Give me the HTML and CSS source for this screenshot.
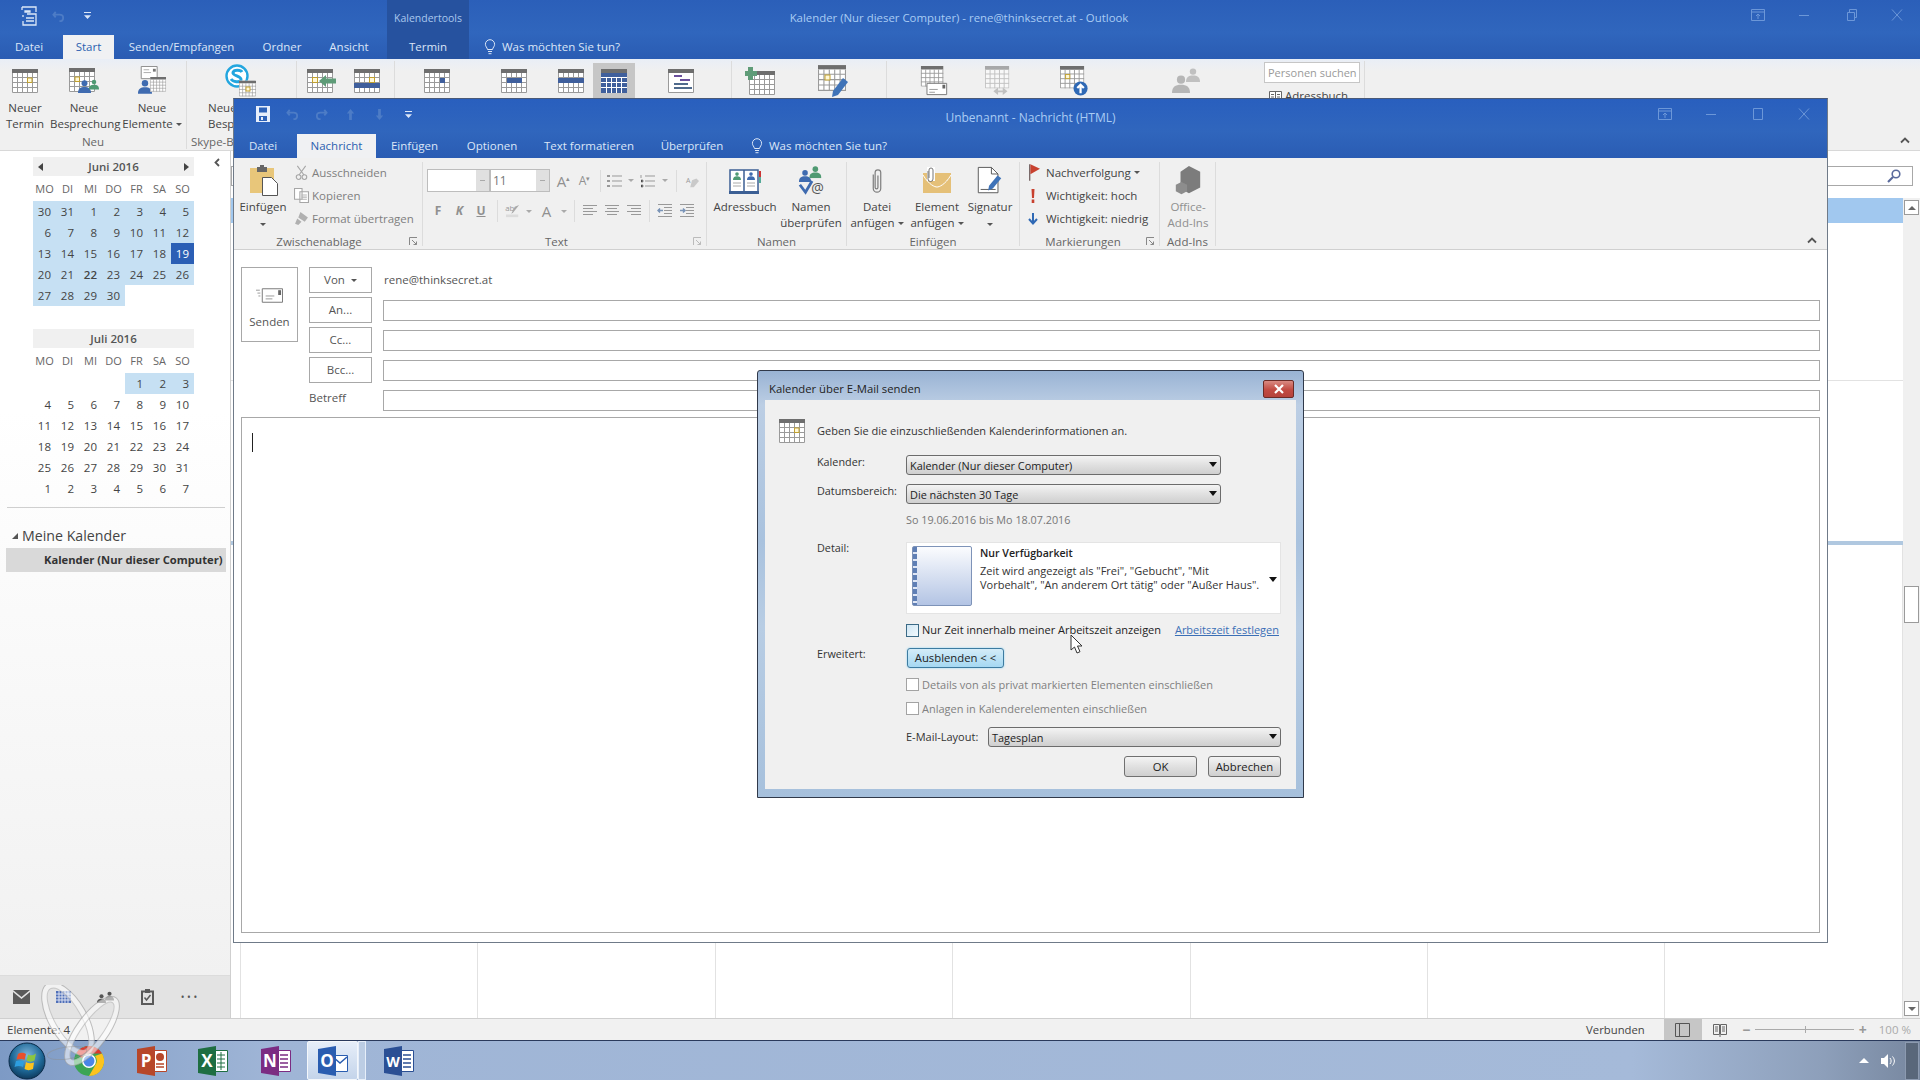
FILE: index.html
```html
<!DOCTYPE html>
<html lang="de">
<head>
<meta charset="utf-8">
<title>Kalender - Outlook</title>
<link rel="stylesheet" href="styles.css">
</head>
<body>
<svg class="defs" aria-hidden="true">
  <symbol id="cal" viewBox="0 0 26 24">
    <path fill="#fff" d="M0 0h26v24H0z"/><path fill="#6e6e6e" d="M0 0h26v4H0z"/>
    <path stroke="#9a9a9a" fill="none" d="M.5 4v19.5h25V4M5.5 4v20M10.5 4v20M15.5 4v20M20.5 4v20M0 8.5h26M0 13.5h26M0 18.5h26"/>
  </symbol>
  <symbol id="bulb" viewBox="0 0 12 16">
    <path fill="none" stroke="#dbe6f7" d="M6 .7a4.6 4.6 0 0 0-4.6 4.6c0 2.2 1.6 3 2.1 5.2h5c.5-2.2 2.1-3 2.1-5.2A4.6 4.6 0 0 0 6 .7zM4 12.5h4M4.5 14.7h3"/>
  </symbol>
  <symbol id="chev" viewBox="0 0 10 7"><path fill="none" stroke="#555" stroke-width="1.8" d="M1 5.5l4-4 4 4"/></symbol>
  <symbol id="launch" viewBox="0 0 9 9"><path fill="none" stroke="#888" d="M.5 8V.5H8M3 3l4.5 4.5M7.5 4.5v3h-3"/></symbol>
  <symbol id="person" viewBox="0 0 14 14"><circle cx="7" cy="3.6" r="3.2"/><path d="M0 14c0-5 2.600-6.500 7-6.500S14 9 14 14z"/></symbol>
</svg>

<div class="outlook">
  <header class="titlebar">
    <div class="tb-top">
      <div class="tb-left">
        <div class="qat">
          <svg class="qat-app" viewBox="0 0 18 20"><path fill="none" stroke="#dce7f8" stroke-width="1.3" d="M2 1h14v5M2 1v3M7 8h9v11H3v-4M3 9v2M6 12h8M6 15h8M5 5h5v1H5z"/></svg>
          <svg class="qat-undo" viewBox="0 0 14 14"><path fill="none" stroke="#4d7cc6" stroke-width="2" d="M4 2L1.500 5 4 8M2 5h6c3 0 4 2 4 3.500S11 12 8 12"/></svg>
          <svg class="qat-drop" viewBox="0 0 8 9"><path fill="#dce7f8" d="M0 0h8v1.200H0zM0 3.500h8L4 8z"/></svg>
        </div>
        <div class="ctx-label">Kalendertools</div>
      </div>
      <div class="tb-title main-title">Kalender (Nur dieser Computer) - rene@thinksecret.at - Outlook</div>
      <div class="winctl">
        <span class="ctl"><svg viewBox="0 0 14 12"><path fill="none" stroke="#6c97d8" d="M.5.5h13v11H.5zM.5 3h13M7 10V5M5 7l2-2 2 2"/></svg></span>
        <span class="ctl"><svg viewBox="0 0 14 12"><path stroke="#6c97d8" d="M2 6.500h10"/></svg></span>
        <span class="ctl"><svg viewBox="0 0 14 12"><path fill="none" stroke="#6c97d8" d="M3.500 3.500h7v8h-7zM5.500 3.500v-3h7v8h-2"/></svg></span>
        <span class="ctl"><svg viewBox="0 0 14 12"><path stroke="#6c97d8" d="M2 .5l10 11M12 .5l-10 11"/></svg></span>
      </div>
    </div>
    <nav class="tabs tabs-main">
      <span class="tab tab-datei">Datei</span>
      <span class="tab tab-on">Start</span>
      <span class="tab">Senden/Empfangen</span>
      <span class="tab">Ordner</span>
      <span class="tab tab-ansicht">Ansicht</span>
      <span class="tab tab-ctx">Termin</span>
      <span class="tab tab-ask"><svg class="bulb"><use href="#bulb"/></svg>Was möchten Sie tun?</span>
    </nav>
  </header>

  <section class="ribbon ribbon-main">
    <div class="mg g-neu">
      <div class="mg-btns">
        <div class="mb mb50"><div class="mb-ic"><svg class="ic26"><use href="#cal"/><rect x="15.500" y="9" width="4.500" height="4.500" fill="#fff8d8" stroke="#c0a030"/></svg></div><div class="mb-t">Neuer<br>Termin</div></div>
        <div class="mb mb68"><div class="mb-ic"><svg class="ic30" viewBox="0 0 30 26"><use href="#cal" width="26" height="24"/><rect x="6" y="9" width="4.500" height="4.500" fill="#fff8d8" stroke="#c0a030"/><use href="#person" x="9" y="12" width="13" height="13" fill="#3f6bb0"/><use href="#person" x="20" y="11" width="10" height="11" fill="#4f9a72"/></svg></div><div class="mb-t">Neue<br>Besprechung</div></div>
        <div class="mb mb68"><div class="mb-ic"><svg class="ic30" viewBox="0 0 30 32"><path fill="#fff" stroke="#888" d="M3.500.5h17v13h-17z"/><path stroke="#aaa" d="M6 4h6M6 7h8"/><rect x="16" y="3" width="3" height="3" fill="#777"/><use href="#person" x="0" y="14" width="15" height="16" fill="#3f6bb0"/><use href="#cal" x="13" y="11" width="17" height="17"/></svg></div><div class="mb-t">Neue<br>Elemente<i class="caret"></i></div></div>
      </div>
      <div class="mg-label">Neu</div>
    </div>
    <div class="mg g-skype">
      <div class="mg-btns">
        <div class="mb mb108"><div class="mb-ic"><svg class="ic32" viewBox="0 0 32 34"><circle cx="12" cy="12" r="10.500" fill="#fff" stroke="#23a6df" stroke-width="2.400"/><path fill="none" stroke="#23a6df" stroke-width="3" d="M17 8c-1-2-8-3-9 .5S17 12 16 16c-1 3-8 2-10-1"/><use href="#cal" x="14" y="16" width="17" height="17"/><rect x="21" y="23" width="4" height="4" fill="#fff8d8" stroke="#c0a030"/></svg></div><div class="mb-t mb-part">Neue<br>Besp</div></div>
      </div>
      <div class="mg-label mg-label-part">Skype-B</div>
    </div>
    <div class="mg g-3">
      <div class="mg-btns">
        <div class="mb mb50"><div class="mb-ic"><svg class="ic30" viewBox="0 0 30 24"><use href="#cal" width="26" height="24"/><rect x="5.500" y="8.500" width="5" height="5" fill="#fff8d8" stroke="#c0a030"/><path fill="#5f9c78" d="M12 12l7-6v3.500h10v5H19V18z"/></svg></div></div>
        <div class="mb mb40"><div class="mb-ic"><svg class="ic26"><use href="#cal"/><path fill="#3f5f9c" d="M0 14h26v5H0z"/><rect x="15.500" y="8.500" width="5" height="5" fill="#fff8d8" stroke="#c0a030"/></svg></div></div>
      </div>
    </div>
    <div class="mg g-4">
      <div class="mg-btns">
        <div class="mb mb84"><div class="mb-ic"><svg class="ic26"><use href="#cal"/><path fill="#3f5f9c" d="M16 9h5v5h-5z"/></svg></div></div>
        <div class="mb mb69"><div class="mb-ic"><svg class="ic26"><use href="#cal"/><path fill="#3f5f9c" d="M6 9h5v5H6zM11 9h5v5h-5zM16 9h5v5h-5z"/></svg></div></div>
        <div class="mb mb45"><div class="mb-ic"><svg class="ic26"><use href="#cal"/><path fill="#3f5f9c" d="M0 9h26v5H0z"/></svg></div></div>
        <div class="mb mb42 mb-sel"><div class="mb-ic"><svg class="ic26"><use href="#cal"/><path fill="#3f5f9c" d="M0 4h26v20H0z"/><path stroke="#fff" d="M5.500 9v15M10.500 9v15M15.500 9v15M20.500 9v15M0 8.500h26M0 13.500h26M0 18.500h26"/></svg></div></div>
        <div class="mb mb92"><div class="mb-ic"><svg class="ic26"><use href="#cal"/><path fill="#fff" d="M1 4h24v19H1z"/><path stroke="#6a4f9c" stroke-width="2" d="M6 7h8M12 11h10"/><path stroke="#4f6a8c" stroke-width="2" d="M6 15h14M6 19h18"/></svg></div></div>
      </div>
    </div>
    <div class="mg g-5">
      <div class="mg-btns">
        <div class="mb mb56"><div class="mb-ic"><svg class="ic30" viewBox="0 0 30 28"><use href="#cal" x="4" y="4" width="26" height="24"/><path fill="#5f9c78" d="M3 0h5v4h4v5H8v4H3V9H0V4h3z"/></svg></div></div>
        <div class="mb mb92"><div class="mb-ic"><svg class="ic32" viewBox="0 0 32 34"><use href="#cal" width="28" height="28"/><rect x="7" y="11" width="5" height="5" fill="#fff8d8" stroke="#c0a030"/><path fill="#3f73b8" d="M25 14l5 4-10 13-6 2 1-6z"/></svg></div></div>
      </div>
    </div>
    <div class="mg g-6">
      <div class="mg-btns">
        <div class="mb mb94"><div class="mb-ic"><svg class="ic30" viewBox="0 0 30 32"><use href="#cal" width="26" height="22"/><path fill="#fff" stroke="#777" d="M7.500 18.500h21v12h-21z"/><path stroke="#999" d="M10 25h9M10 28h6"/><rect x="24" y="20" width="3" height="4" fill="#666"/></svg></div></div>
        <div class="mb mb36"><div class="mb-ic"><svg class="ic30 faded" viewBox="0 0 30 32"><use href="#cal" width="26" height="24"/><path fill="#999" d="M9 27l5-4v3h5v-3l5 4-5 4v-3h-5v3z"/></svg></div></div>
        <div class="mb mb113"><div class="mb-ic"><svg class="ic30" viewBox="0 0 30 32"><use href="#cal" width="26" height="24"/><rect x="6" y="9" width="4.500" height="4.500" fill="#fff8d8" stroke="#c0a030"/><circle cx="22" cy="24" r="7.500" fill="#2f69b5"/><path stroke="#fff" stroke-width="2.400" fill="none" d="M22 29v-9M18.500 23.500L22 20l3.500 3.500"/></svg></div></div>
        <div class="mb mb114"><div class="mb-ic"><svg class="ic32 faded" viewBox="0 0 32 34"><use href="#person" x="1" y="10" width="18" height="20" fill="#888"/><use href="#person" x="15" y="1" width="14" height="20" fill="#999"/></svg></div></div>
      </div>
    </div>
    <div class="psearch">
      <div class="psearch-box">Personen suchen</div>
      <div class="psearch-ab"><svg class="ab-ic" viewBox="0 0 13 11"><path fill="#fff" stroke="#666" d="M.5.5h12v10H.5z"/><path stroke="#666" d="M6.500 1v9M2 3.500h3M2 6h3M8 3.500h3M8 6h3"/></svg>Adressbuch</div>
    </div>
    <div class="mg-end"><svg class="chev"><use href="#chev"/></svg></div>
  </section>

  <main class="body">
    <aside class="nav">
      <svg class="nav-collapse" viewBox="0 0 6 9"><path fill="none" stroke="#555" stroke-width="1.800" d="M5 1L1.500 4.500 5 8"/></svg>
      <section class="month">
        <div class="m-head"><i class="tri-l"></i><b>Juni 2016</b><i class="tri-r"></i></div>
        <div class="wk"><span>MO</span><span>DI</span><span>MI</span><span>DO</span><span>FR</span><span>SA</span><span>SO</span></div>
        <div class="days">
          <span class="in">30</span><span class="in">31</span><span class="in">1</span><span class="in">2</span><span class="in">3</span><span class="in">4</span><span class="in">5</span>
          <span class="in">6</span><span class="in">7</span><span class="in">8</span><span class="in">9</span><span class="in">10</span><span class="in">11</span><span class="in">12</span>
          <span class="in">13</span><span class="in">14</span><span class="in">15</span><span class="in">16</span><span class="in">17</span><span class="in">18</span><span class="today">19</span>
          <span class="in">20</span><span class="in">21</span><span class="in strong">22</span><span class="in">23</span><span class="in">24</span><span class="in">25</span><span class="in">26</span>
          <span class="in">27</span><span class="in">28</span><span class="in">29</span><span class="in">30</span><span></span><span></span><span></span>
        </div>
      </section>
      <section class="month month2">
        <div class="m-head m-head-c"><b>Juli 2016</b></div>
        <div class="wk"><span>MO</span><span>DI</span><span>MI</span><span>DO</span><span>FR</span><span>SA</span><span>SO</span></div>
        <div class="days">
          <span></span><span></span><span></span><span></span><span class="in">1</span><span class="in">2</span><span class="in">3</span>
          <span>4</span><span>5</span><span>6</span><span>7</span><span>8</span><span>9</span><span>10</span>
          <span>11</span><span>12</span><span>13</span><span>14</span><span>15</span><span>16</span><span>17</span>
          <span>18</span><span>19</span><span>20</span><span>21</span><span>22</span><span>23</span><span>24</span>
          <span>25</span><span>26</span><span>27</span><span>28</span><span>29</span><span>30</span><span>31</span>
          <span>1</span><span>2</span><span>3</span><span>4</span><span>5</span><span>6</span><span>7</span>
        </div>
      </section>
      <div class="nav-rule"></div>
      <div class="my-cals"><i class="tri-d"></i>Meine Kalender</div>
      <div class="cal-sel">Kalender (Nur dieser Computer)</div>
      <div class="nav-fill"></div>
      <div class="nav-mods">
        <span class="mod"><svg viewBox="0 0 17 14" class="mod-mail"><path fill="#5a5a5a" d="M0 0h17L8.500 7zM0 2l8.500 7L17 2v12H0z"/></svg></span>
        <span class="mod"><svg viewBox="0 0 15 12" class="mod-cal"><path fill="#4f6fb8" d="M0 0h15v12H0z"/><path stroke="#dfe4f2" d="M3 0v12M6 0v12M9 0v12M12 0v12M0 3h15M0 6h15M0 9h15"/></svg></span>
        <span class="mod"><svg viewBox="0 0 17 12" class="mod-ppl"><use href="#person" x="0" y="3" width="9" height="9" fill="#555"/><use href="#person" x="8" y="0" width="9" height="10" fill="#555"/></svg></span>
        <span class="mod"><svg viewBox="0 0 13 16" class="mod-task"><path fill="none" stroke="#5a5a5a" stroke-width="2" d="M1 2.500h11V15H1z"/><path fill="#5a5a5a" d="M4 0h5v4H4z"/><path fill="none" stroke="#5a5a5a" stroke-width="1.500" d="M3.500 8.500l2 2.500 4-5"/></svg></span>
        <span class="mod mod-dots">• • •</span>
      </div>
    </aside>
    <div class="view">
      <div class="view-top"><div class="vsearch"><svg viewBox="0 0 14 14" class="mag"><circle cx="9" cy="5" r="3.800" fill="none" stroke="#5a6a9c" stroke-width="1.600"/><path stroke="#5a6a9c" stroke-width="2.200" d="M6 8l-5 5"/></svg></div></div>
      <div class="view-main">
        <div class="grid">
          <div class="g-blue"></div>
          <div class="g-slot1"></div>
          <div class="g-slot2"></div>
          <div class="g-bar"></div>
          <div class="g-days"><span class="dcol"></span><span class="dcol"></span><span class="dcol"></span><span class="dcol"></span><span class="dcol"></span><span class="dcol"></span><span class="dcol dcol-last"></span></div>
        </div>
        <div class="sb">
          <span class="sb-btn"><i class="up"></i></span>
          <span class="sb-thumb"></span>
          <span class="sb-btn sb-down"><i class="down"></i></span>
        </div>
      </div>
    </div>
  </main>

  <footer class="status">
    <span class="st-count">Elemente: 4</span>
    <div class="st-right">
      <span class="st-conn">Verbunden</span>
      <span class="st-view"><svg viewBox="0 0 15 14"><path fill="none" stroke="#555" d="M.5.5h14v13H.5zM4.500 1v12"/></svg></span>
      <span class="st-read"><svg viewBox="0 0 14 14"><path fill="none" stroke="#666" d="M.5 1.500h6v10h-6zM7.500 1.500h6v10h-6zM2 4h3M2 6h3M2 8h3M9 4h3M9 6h3M9 8h3M7 12v2"/></svg></span>
      <span class="st-zm">−</span>
      <span class="st-slider"><i></i></span>
      <span class="st-zm st-zp">+</span>
      <span class="st-pct">100 %</span>
    </div>
  </footer>

  <div class="taskbar">
    <span class="tk tk-start"><svg viewBox="0 0 38 38" class="orb"><defs><radialGradient id="og" cx=".5" cy=".35" r=".7"><stop offset="0" stop-color="#7fb6dc"/><stop offset=".6" stop-color="#1d6796"/><stop offset="1" stop-color="#0b3050"/></radialGradient></defs><circle cx="19" cy="19" r="18" fill="url(#og)" stroke="#0a2a48"/><path fill="#e8502c" d="M10 12c3-2 6-1 8 0l-1.500 6c-2-1-4-1.500-8-.5z"/><path fill="#8cc63f" d="M20 12.500c3 1.500 5 1 8-1l-1.500 7c-3 1.500-5 1.500-8 0z"/><path fill="#2d9ee0" d="M8 19c3-1 6-.5 8.200.5L15 25c-2-1-5-1.500-8.500 0z"/><path fill="#fcc31e" d="M18 20c2 1.500 5 1.500 8 .5L25 27c-3 1.500-6 1.500-8.500 0z"/></svg></span>
    <span class="tk tk-chrome"><svg viewBox="0 0 30 30" class="tk-ic"><circle cx="15" cy="15" r="15" fill="#3ca555"/><path fill="#e0352b" d="M15 0a15 15 0 0 1 13 7.500H15a7.500 7.500 0 0 0-7 4.800L2.500 6.800A15 15 0 0 1 15 0z"/><path fill="#fcc31e" d="M28 7.500A15 15 0 0 1 15 30l6.500-11.200A7.500 7.500 0 0 0 21 10z"/><circle cx="15" cy="15" r="7" fill="#fff"/><circle cx="15" cy="15" r="5.500" fill="#4a85e8"/></svg></span>
    <span class="tk tk-ppt"><svg viewBox="0 0 30 30" class="tk-ic"><path fill="#fff" stroke="#b7472a" d="M14 4.500h15.500v21H14z"/><path fill="#b7472a" d="M0 3l18-3v30L0 27z"/><circle cx="23" cy="11" r="4" fill="#b7472a"/><path stroke="#b7472a" stroke-width="1.500" d="M19 18h8M19 21h8"/><text x="9" y="21" class="tk-l">P</text></svg></span>
    <span class="tk tk-xl"><svg viewBox="0 0 30 30" class="tk-ic"><path fill="#fff" stroke="#1e6e42" d="M14 4.500h15.500v21H14z"/><path stroke="#1e6e42" d="M19 9h8M19 13h8M19 17h8M19 21h8M23 6v18"/><path fill="#1e6e42" d="M0 3l18-3v30L0 27z"/><text x="9" y="21" class="tk-l">X</text></svg></span>
    <span class="tk tk-on"><svg viewBox="0 0 30 30" class="tk-ic"><path fill="#fff" stroke="#7b2c82" d="M14 4.500h15.500v21H14z"/><path stroke="#7b2c82" stroke-width="1.500" d="M19 9h8M19 13h8M19 17h8M19 21h8"/><path fill="#7b2c82" d="M0 3l18-3v30L0 27z"/><text x="9" y="21" class="tk-l">N</text></svg></span>
    <span class="tk tk-ol"><svg viewBox="0 0 30 30" class="tk-ic"><path fill="#fff" stroke="#2a5db0" d="M14 9.500h15.500v16H14z"/><path fill="none" stroke="#2a5db0" stroke-width="1.500" d="M15 11l7 6 7-6"/><path fill="#2a5db0" d="M0 3l18-3v30L0 27z"/><text x="9" y="21" class="tk-l">O</text></svg></span>
    <span class="tk-ghost"></span>
    <span class="tk tk-wd"><svg viewBox="0 0 30 30" class="tk-ic"><path fill="#fff" stroke="#2b4f94" d="M14 4.500h15.500v21H14z"/><path stroke="#2b4f94" stroke-width="1.500" d="M19 9h8M19 13h8M19 17h8M19 21h8"/><path fill="#2b4f94" d="M0 3l18-3v30L0 27z"/><text x="9" y="21" class="tk-l tk-l-w">W</text></svg></span>
    <div class="tray">
      <i class="tray-up"></i>
      <svg class="tray-vol" viewBox="0 0 16 14"><path fill="#fff" d="M0 4h3l4-4v14l-4-4H0z"/><path fill="none" stroke="#fff" d="M9 4c1.500 2 1.500 4 0 6M11.500 2.500c2.500 3 2.500 6 0 9"/></svg>
      <span class="tray-desk"></span>
    </div>
  </div>
</div>

<div class="msg">
  <header class="msg-head">
    <div class="msg-top">
      <div class="qat qat-msg">
        <svg class="q-save" viewBox="0 0 14 16"><path fill="#e6eefb" d="M0 0h14v16H0z"/><path fill="#2d62b8" d="M3 1.500h8v5H3zM3 10h8v5H3z"/><path fill="#e6eefb" d="M5 11h2v3H5z"/></svg>
        <svg class="q-a" viewBox="0 0 14 14"><path fill="none" stroke="#4d7cc6" stroke-width="2" d="M4 2L1.500 5 4 8M2 5h6c3 0 4 2 4 3.500S11 12 8 12"/></svg>
        <svg class="q-a" viewBox="0 0 14 14"><path fill="none" stroke="#4d7cc6" stroke-width="2" d="M10 2l2.500 3L10 8M12 5H6C3 5 2 7 2 8.500S3 12 6 12"/></svg>
        <svg class="q-a" viewBox="0 0 14 14"><path fill="#4d7cc6" d="M7 1l4 5H8.500v7h-3V6H3z"/></svg>
        <svg class="q-a" viewBox="0 0 14 14"><path fill="#4d7cc6" d="M7 13l4-5H8.500V1h-3v7H3z"/></svg>
        <svg class="q-d" viewBox="0 0 8 9"><path fill="#dce7f8" d="M0 0h8v1.200H0zM0 3.500h8L4 8z"/></svg>
      </div>
      <div class="tb-title msg-title">Unbenannt - Nachricht (HTML)</div>
      <div class="winctl">
        <span class="ctl"><svg viewBox="0 0 14 12"><path fill="none" stroke="#6c97d8" d="M.5.5h13v11H.5zM.5 3h13M7 10V5M5 7l2-2 2 2"/></svg></span>
        <span class="ctl"><svg viewBox="0 0 14 12"><path stroke="#6c97d8" d="M2 6.500h10"/></svg></span>
        <span class="ctl"><svg viewBox="0 0 14 12"><path fill="none" stroke="#6c97d8" d="M2.500.5h9v11h-9z"/></svg></span>
        <span class="ctl"><svg viewBox="0 0 14 12"><path stroke="#6c97d8" d="M2 .5l10 11M12 .5l-10 11"/></svg></span>
      </div>
    </div>
    <nav class="tabs tabs-msg">
      <span class="tab tab-datei">Datei</span>
      <span class="tab tab-on">Nachricht</span>
      <span class="tab">Einfügen</span>
      <span class="tab">Optionen</span>
      <span class="tab">Text formatieren</span>
      <span class="tab">Überprüfen</span>
      <span class="tab tab-ask"><svg class="bulb"><use href="#bulb"/></svg>Was möchten Sie tun?</span>
    </nav>
  </header>

  <section class="ribbon ribbon-msg">
    <div class="rg rg-clip">
      <div class="rg-items">
        <div class="big big-paste">
          <div class="big-ic"><svg class="ic-paste" viewBox="0 0 28 31"><path fill="#e8c67a" d="M0 3h24v25H0z"/><path fill="#666" d="M7 2h10v5H7z"/><path fill="#666" d="M10 0h4v3h-4z"/><path fill="#fff" stroke="#555" d="M12.500 12.500h9l6 6v12h-15z"/></svg></div>
          <div class="big-t">Einfügen<br><i class="caret caret-c"></i></div>
        </div>
        <div class="smalls smalls-dim">
          <div class="sm"><svg class="sm-ic" viewBox="0 0 14 18"><path fill="none" stroke="#a6a6a6" stroke-width="1.300" d="M2 1l8 11M12 1L4 12"/><circle cx="3.500" cy="14.500" r="2.800" fill="none" stroke="#a6a6a6" stroke-width="1.300"/><circle cx="10.500" cy="14.500" r="2.800" fill="none" stroke="#a6a6a6" stroke-width="1.300"/></svg>Ausschneiden</div>
          <div class="sm"><svg class="sm-ic" viewBox="0 0 14 14"><path fill="#fff" stroke="#a6a6a6" d="M.5.5h7v10h-7zM5.500 3.500h8v10h-8z"/><path stroke="#b5b5b5" d="M7 6.500h5M7 8.500h5M7 10.500h5"/></svg>Kopieren</div>
          <div class="sm"><svg class="sm-ic" viewBox="0 0 14 14"><path fill="#b0b0b0" d="M6 1l7 5-3 4-6-4zM3 7l4 3-3 3-3-1z"/></svg>Format übertragen</div>
        </div>
      </div>
      <div class="rg-label lbl-clip">Zwischenablage</div>
      <svg class="launch"><use href="#launch"/></svg>
    </div>

    <div class="rg rg-text">
      <div class="rg-items rg-fmt">
        <div class="fmt fmt1">
          <span class="fbox"><i class="fbox-arrow"></i></span>
          <span class="fbox fbox2">11<i class="fbox-arrow"></i></span>
          <span class="fi fi-a1">A<sup>▴</sup></span>
          <span class="fi fi-a2">A<sup>▾</sup></span>
          <span class="fsep"></span>
          <span class="fi"><svg class="f16" viewBox="0 0 16 14"><path fill="#999" d="M0 1h3v2H0zM0 6h3v2H0zM0 11h3v2H0z"/><path stroke="#999" d="M5 2h10M5 7h10M5 12h10"/></svg></span>
          <span class="fi"><i class="caret caret-g"></i></span>
          <span class="fi"><svg class="f16" viewBox="0 0 16 14"><path stroke="#999" d="M5 2h10M5 7h10M5 12h10M1 1v3M1 6h2v2H1M1 11h2v2H1"/></svg></span>
          <span class="fi"><i class="caret caret-g"></i></span>
          <span class="fsep"></span>
          <span class="fi"><svg class="f16" viewBox="0 0 16 16"><path fill="#c9c9c9" d="M8 7l5-2 3 3-6 7H6z"/><text x="1" y="10" class="f-ltr">A</text></svg></span>
        </div>
        <div class="fmt fmt2">
          <span class="fi fi-b">F</span>
          <span class="fi fi-b fi-k">K</span>
          <span class="fi fi-b fi-u">U</span>
          <span class="fsep"></span>
          <span class="fi"><svg class="f16" viewBox="0 0 18 16"><text x="0" y="8" class="f-ab">ab</text><path fill="#a8a8a8" d="M11 3l5-2-7 9-2 1z"/><path fill="#dcdcdc" d="M1 12h14v3H1z"/></svg></span>
          <span class="fi"><i class="caret caret-g"></i></span>
          <span class="fi fi-A">A</span>
          <span class="fi"><i class="caret caret-g"></i></span>
          <span class="fsep"></span>
          <span class="fi"><svg class="f16" viewBox="0 0 16 14"><path stroke="#999" d="M1 1.500h14M1 4.500h10M1 7.500h14M1 10.500h10"/></svg></span>
          <span class="fi"><svg class="f16" viewBox="0 0 16 14"><path stroke="#999" d="M1 1.500h14M3 4.500h10M1 7.500h14M3 10.500h10"/></svg></span>
          <span class="fi"><svg class="f16" viewBox="0 0 16 14"><path stroke="#999" d="M1 1.500h14M5 4.500h10M1 7.500h14M5 10.500h10"/></svg></span>
          <span class="fsep"></span>
          <span class="fi"><svg class="f16" viewBox="0 0 16 14"><path stroke="#999" d="M1 .5h14M7 3.500h8M7 6.500h8M7 9.500h8M1 12.500h14"/><path stroke="#7a94b8" stroke-width="1.500" d="M1 6.500h5M3 4.500l-2 2 2 2"/></svg></span>
          <span class="fi"><svg class="f16" viewBox="0 0 16 14"><path stroke="#999" d="M1 .5h14M7 3.500h8M7 6.500h8M7 9.500h8M1 12.500h14"/><path stroke="#7a94b8" stroke-width="1.500" fill="none" d="M1 6.500h5M4 4.500l2 2-2 2"/></svg></span>
        </div>
      </div>
      <div class="rg-label lbl-text">Text</div>
      <svg class="launch launch-dim"><use href="#launch"/></svg>
    </div>

    <div class="rg rg-namen">
      <div class="rg-items">
        <div class="big bw76">
          <div class="big-ic"><svg class="ic-32" viewBox="0 0 32 26"><path fill="#fff" stroke="#3c5f94" stroke-width="1.500" d="M1 2h14v22H1zM15 2h14v22H15z"/><path fill="#3c5f94" d="M0 23h30v3H0z"/><path fill="#c33" d="M30 3h2v6h-2z"/><path fill="#5a9" d="M30 9h2v6h-2z"/><use href="#person" x="4" y="4" width="8" height="8" fill="#4f9a72"/><use href="#person" x="18" y="4" width="8" height="8" fill="#3f6bb0"/><path stroke="#aaa" d="M4 15h8M4 18h8M18 15h8M18 18h8"/></svg></div>
          <div class="big-t">Adressbuch</div>
        </div>
        <div class="big bw60">
          <div class="big-ic"><svg class="ic-32" viewBox="0 0 32 32"><use href="#person" x="1" y="4" width="13" height="13" fill="#3f6bb0"/><use href="#person" x="12" y="0" width="13" height="13" fill="#4f9a72"/><path fill="none" stroke="#3f6bb0" stroke-width="3" d="M2 20l6 8 7-12"/><text x="14" y="29" class="at">@</text></svg></div>
          <div class="big-t big-t-ck">Namen<br>überprüfen</div>
        </div>
      </div>
      <div class="rg-label">Namen</div>
    </div>

    <div class="rg rg-ins">
      <div class="rg-items">
        <div class="big bw60">
          <div class="big-ic"><svg class="ic-clip" viewBox="0 0 14 30"><path fill="none" stroke="#7e7e7e" stroke-width="1.300" d="M3 8v15a4 4 0 0 0 8 0V6a3 3 0 0 0-6 0v16a1.500 1.500 0 0 0 3 0V9"/></svg></div>
          <div class="big-t">Datei<br>anfügen<i class="caret"></i></div>
        </div>
        <div class="big bw60">
          <div class="big-ic"><svg class="ic-32" viewBox="0 0 32 28"><path fill="#e5c078" d="M2 6h28v20H2z"/><path fill="none" stroke="#fff" d="M2 8c6 10 12 12 14 12s8-2 14-12"/><path fill="#fff" d="M6 0h8v14H6z"/><path fill="none" stroke="#777" d="M7 4v8a2.500 2.500 0 0 0 5 0V3a2 2 0 0 0-4 0v8"/></svg></div>
          <div class="big-t">Element<br>anfügen<i class="caret"></i></div>
        </div>
        <div class="big bw46">
          <div class="big-ic"><svg class="ic-32" viewBox="0 0 32 32"><path fill="#fff" stroke="#555" d="M3.500 1.500h14l7 7v20h-21z"/><path fill="none" stroke="#555" d="M17.500 1.500v7h7"/><path stroke="#555" d="M6 25h16"/><path fill="#3f73b8" d="M24 10l4 3-9 11-5 2 1-5z"/></svg></div>
          <div class="big-t">Signatur<br><i class="caret caret-c"></i></div>
        </div>
      </div>
      <div class="rg-label">Einfügen</div>
    </div>

    <div class="rg rg-mark">
      <div class="rg-items">
        <div class="smalls smalls-mark">
          <div class="sm"><svg class="sm-flag" viewBox="0 0 12 18"><path fill="#7a6a6a" d="M0 0h1.500v18H0z"/><path fill="#c8412f" d="M1.500 0L12 5 1.500 11z"/></svg>Nachverfolgung<i class="caret"></i></div>
          <div class="sm"><svg class="sm-ex" viewBox="0 0 4 14"><path fill="#c8412f" d="M.5 0h3l-.5 9H1zM.7 10.500h2.600V14H.7z"/></svg>Wichtigkeit: hoch</div>
          <div class="sm"><svg class="sm-ex sm-dn" viewBox="0 0 10 12"><path fill="none" stroke="#2f69b5" stroke-width="2" d="M5 0v10M1 6l4 4.500L9 6"/></svg>Wichtigkeit: niedrig</div>
        </div>
      </div>
      <div class="rg-label lbl-mark">Markierungen</div>
      <svg class="launch"><use href="#launch"/></svg>
    </div>

    <div class="rg rg-add">
      <div class="rg-items">
        <div class="big big-add">
          <div class="big-ic"><svg class="ic-32" viewBox="0 0 28 32"><path fill="#7c7c7c" d="M15 0l12 6v17l-12 6-3-1.500V22l-6-3V6z"/><path fill="#8d8d8d" d="M7 17l6 3v7l-6 3-6-3v-7z"/></svg></div>
          <div class="big-t big-t-dim">Office-<br>Add-Ins</div>
        </div>
      </div>
      <div class="rg-label">Add-Ins</div>
    </div>
    <div class="rg-end"><svg class="chev"><use href="#chev"/></svg></div>
  </section>

  <section class="compose">
    <div class="head-rows">
      <div class="send"><svg class="send-ic" viewBox="0 0 28 15"><path fill="#fff" stroke="#777" d="M6.500.5h21v14h-21z"/><path stroke="#999" d="M10 8h9M10 11h7M0 2h4M1.500 5h3M2.500 8h2"/><path fill="#666" d="M23 2h3v5h-3z"/></svg><span>Senden</span></div>
      <div class="fields">
        <button class="fbtn">Von<i class="caret caret-d"></i></button><div class="from">rene@thinksecret.at</div>
        <button class="fbtn">An...</button><div class="inp"></div>
        <button class="fbtn">Cc...</button><div class="inp"></div>
        <button class="fbtn">Bcc...</button><div class="inp"></div>
        <div class="subj">Betreff</div><div class="inp"></div>
      </div>
    </div>
    <div class="mbody"><i class="caretbar"></i></div>
  </section>
</div>

<div class="dlg">
  <header class="dlg-head">
    <span class="dlg-title">Kalender über E-Mail senden</span>
    <span class="dlg-x"><svg viewBox="0 0 10 10"><path stroke="#fff" stroke-width="2.200" d="M1 1l8 8M9 1l-8 8"/></svg></span>
  </header>
  <div class="dlg-body">
    <div class="intro">
      <svg class="ic26"><use href="#cal"/><rect x="15.500" y="9" width="4.500" height="4.500" fill="#fff8d8" stroke="#c0a030"/></svg>
      <span>Geben Sie die einzuschließenden Kalenderinformationen an.</span>
    </div>
    <div class="form">
      <div class="frow fr1"><label class="fl">Kalender:</label><div class="sel sel315">Kalender (Nur dieser Computer)<i class="sel-a"></i></div></div>
      <div class="frow fr2"><label class="fl">Datumsbereich:</label><div class="sel sel315">Die nächsten 30 Tage<i class="sel-a"></i></div></div>
      <div class="frow fr3"><span class="fl"></span><div class="daterange">So 19.06.2016 bis Mo 18.07.2016</div></div>
      <div class="frow fr4"><label class="fl fl-up">Detail:</label>
        <div class="detail">
          <div class="thumb"></div>
          <div class="det-t"><b>Nur Verfügbarkeit</b><p>Zeit wird angezeigt als "Frei", "Gebucht", "Mit<br>Vorbehalt", "An anderem Ort tätig" oder "Außer Haus".</p></div>
          <i class="sel-a det-a"></i>
        </div>
      </div>
      <div class="frow fr5"><span class="fl"></span><span class="cb cb-on"></span><span class="cb-l cb-up">Nur Zeit innerhalb meiner Arbeitszeit anzeigen</span><a class="dlink">Arbeitszeit festlegen</a></div>
      <div class="frow fr6"><label class="fl fl-up">Erweitert:</label><button class="hide-btn">Ausblenden &lt; &lt;</button></div>
      <div class="frow fr7"><span class="fl"></span><span class="cb"></span><span class="cb-l cb-dim">Details von als privat markierten Elementen einschließen</span></div>
      <div class="frow fr8"><span class="fl"></span><span class="cb"></span><span class="cb-l cb-dim">Anlagen in Kalenderelementen einschließen</span></div>
      <div class="frow fr9"><span class="fl"></span><label class="lay-l">E-Mail-Layout:</label><div class="sel sel-lay">Tagesplan<i class="sel-a"></i></div></div>
      <div class="dlg-foot"><button class="dbtn">OK</button><button class="dbtn">Abbrechen</button></div>
    </div>
  </div>
</div>

<svg class="cursor" viewBox="0 0 13 20"><path fill="#fff" stroke="#333" d="M1 1v15l3.500-3 2.500 6 3-1.300-2.500-5.700H12z"/></svg>
<svg class="swirl" viewBox="0 0 90 85"><g fill="none"><ellipse cx="28" cy="34" rx="16" ry="38" transform="rotate(-30 28 34)" stroke="#fff" stroke-opacity=".55" stroke-width="6"/><ellipse cx="28" cy="34" rx="19" ry="41" transform="rotate(-30 28 34)" stroke="#8f8f8f" stroke-opacity=".55"/><ellipse cx="28" cy="34" rx="13" ry="35" transform="rotate(-30 28 34)" stroke="#8f8f8f" stroke-opacity=".4"/><ellipse cx="52" cy="46" rx="13" ry="38" transform="rotate(36 52 46)" stroke="#fff" stroke-opacity=".55" stroke-width="6"/><ellipse cx="52" cy="46" rx="16" ry="41" transform="rotate(36 52 46)" stroke="#8f8f8f" stroke-opacity=".55"/><ellipse cx="52" cy="46" rx="10" ry="35" transform="rotate(36 52 46)" stroke="#8f8f8f" stroke-opacity=".4"/><ellipse cx="27" cy="68" rx="20" ry="6" transform="rotate(-8 27 68)" stroke="#8f8f8f" stroke-opacity=".45" stroke-width="1"/></g></svg>
</body>
</html>
```

FILE: styles.css
```css
* { box-sizing: border-box; }
html, body { margin: 0; padding: 0; }
body {
  position: relative;
  width: 1920px;
  height: 1080px;
  overflow: hidden;
  background: #fff;
  color: #444;
  font: 11.5px/16px "Open Sans", "Liberation Sans", sans-serif;
}
.defs { position: absolute; width: 0; height: 0; }
svg { display: block; flex: none; }
i { display: block; font-style: normal; }
button { font: inherit; color: inherit; padding: 0; }

.outlook { display: flex; flex-direction: column; width: 1920px; height: 1080px; }

/* title bars */
.titlebar, .msg-head {
  flex: none;
  background: linear-gradient(#2b5fb9, #3066bd 55%, #2a5cb3);
  color: #dbe6f7;
}
.titlebar { height: 59px; }
.msg-head { height: 59px; background: linear-gradient(#295fbe, #3066bd 55%, #2a5cb3); }
.tb-top { display: grid; grid-template-columns: 1fr auto 1fr; height: 35px; }
.msg-top { display: grid; grid-template-columns: 1fr auto 1fr; height: 35px; }
.tb-left { display: flex; }
.qat { display: flex; align-items: center; width: 387px; padding-left: 20px; }
.qat-app { width: 18px; height: 20px; margin-top: -3px; }
.qat-undo { width: 13px; height: 13px; margin: -3px 0 0 14px; }
.qat-drop { width: 7px; height: 8px; margin: -3px 0 0 19px; }
.ctx-label {
  width: 82px;
  height: 35px;
  padding-top: 10px;
  text-align: center;
  font-size: 10.5px;
  color: #a9c8ee;
  background: #26529f;
}
.tb-title { padding-top: 10px; font-size: 12px; color: #a9ccf4; white-space: nowrap; }
.main-title { padding-right: 2px; font-size: 11.400px; }
.msg-title { padding-top: 11px; }
.winctl { display: flex; justify-content: flex-end; }
.ctl { display: flex; align-items: center; justify-content: center; width: 46.300px; height: 30px; }
.ctl svg { width: 14px; height: 12px; }

.tabs { display: grid; height: 24px; }
.tabs-main { grid-template-columns: 63px 51px 135px 66px 72px 82px 1fr; }
.tabs-msg { grid-template-columns: 63px 79px 77px 78px 116px 90px 1fr; }
.tab { text-align: center; font-size: 11.5px; line-height: 24px; white-space: nowrap; }
.tab-datei { padding-right: 5px; }
.tab-ansicht { padding-right: 4px; }
.tab-on { background: #f0f1f3; color: #2b5fb0; }
.tab-ctx { background: #26529f; }
.tab-ask { display: flex; align-items: center; text-align: left; padding-left: 15px; }
.tabs-msg .tab-ask { padding-left: 14px; }
.bulb { width: 12px; height: 16px; margin-right: 6px; }

/* main ribbon */
.ribbon { flex: none; display: flex; height: 92px; background: #f0f0f0; }
.ribbon-main { background: linear-gradient(#e9eef6, #f0f0f0 12px); border-bottom: 1px solid #d8d8d8; }
.mg { display: flex; flex-direction: column; flex: none; border-right: 1px solid #dcdcdc; height: 88px; margin-top: 2px; }
.g-neu { width: 187px; }
.g-skype { width: 110px; }
.g-3 { width: 98px; }
.g-4 { width: 337px; }
.g-5 { width: 155px; }
.g-6 { width: 357px; border-right: 0; }
.mg-btns { display: flex; flex: none; height: 72px; padding-top: 2px; }
.mb { flex: none; text-align: center; color: #444; }
.mb36 { width: 36px; } .mb40 { width: 40px; } .mb42 { width: 42px; } .mb45 { width: 45px; }
.mb50 { width: 50px; } .mb56 { width: 56px; } .mb68 { width: 68px; } .mb69 { width: 69px; }
.mb84 { width: 84px; } .mb92 { width: 92px; } .mb94 { width: 94px; } .mb108 { width: 108px; }
.mb113 { width: 113px; } .mb114 { width: 114px; }
.mb-ic { display: flex; align-items: center; justify-content: center; height: 36px; }
.mb-sel { height: 36px; background: #c6c6c6; }
.mb-t { margin-top: 1px; white-space: nowrap; }
.mb-part { padding-left: 21px; text-align: left; }
.ic26 { width: 26px; height: 24px; overflow: visible; }
.ic30 { width: 30px; height: 30px; }
.ic32 { width: 32px; height: 34px; }
.faded { opacity: .55; }
.caret {
  display: inline-block;
  margin-left: 3px;
  vertical-align: 2px;
  border: 3px solid transparent;
  border-top-color: #555;
  border-bottom-width: 0;
}
.caret-c { margin-left: 0; vertical-align: 1px; }
.caret-d { margin-left: 6px; }
.caret-g { margin: 0; border-top-color: #aaa; }
.mg-label { margin-top: 1px; text-align: center; color: #666; }
.mg-label-part { padding-left: 4px; text-align: left; white-space: nowrap; }
.psearch { flex: none; width: 96px; margin: 3px 0 0 20px; }
.psearch-box {
  height: 21px;
  border: 1px solid #c6c6c6;
  background: #fff;
  padding-left: 3px;
  color: #9a9a9a;
  font-size: 11px;
  line-height: 19px;
  white-space: nowrap;
}
.psearch-ab { display: flex; align-items: center; margin-top: 5px; padding-left: 5px; white-space: nowrap; }
.ab-ic { width: 13px; height: 11px; margin-right: 3px; }
.mg-end {
  flex: 1;
  display: flex;
  align-items: flex-end;
  justify-content: flex-end;
  height: 88px;
  padding: 0 10px 5px 0;
  border-left: 1px solid #dcdcdc;
  margin: 2px 0 0 4px;
}
.chev { width: 10px; height: 7px; }

/* body */
.body { flex: 1; display: flex; min-height: 0; }
.nav {
  position: relative;
  flex: none;
  display: flex;
  flex-direction: column;
  width: 231px;
  background: linear-gradient(#fff 30%, #f0f0f0 100%);
  border-right: 1px solid #cfcfcf;
  padding-top: 6px;
}
.nav-collapse { position: absolute; left: 214px; top: 7px; width: 6px; height: 9px; }
.month { flex: none; width: 161px; margin-left: 33px; color: #444; }
.month2 { margin-top: 23px; }
.m-head {
  display: flex;
  align-items: center;
  justify-content: space-between;
  height: 19px;
  padding: 0 5px;
  background: #f0f0f0;
  font-size: 11.500px;
}
.m-head b { font-weight: 600; color: #555; }
.m-head-c { justify-content: center; }
.tri-l, .tri-r { border: 4px solid transparent; }
.tri-l { border-right: 5px solid #444; border-left: 0; }
.tri-r { border-left: 5px solid #444; border-right: 0; }
.wk { display: grid; grid-template-columns: repeat(7, 23px); height: 25px; line-height: 25px; text-align: center; color: #666; font-size: 11px; }
.days { display: grid; grid-template-columns: repeat(7, 23px); grid-auto-rows: 21px; line-height: 21px; text-align: right; font-size: 11.500px; }
.days span { padding-right: 5px; }
.in { background: #c6e0f3; }
.today { background: #2b5fb5; color: #fff; }
.strong { font-weight: 600; }
.nav-rule { flex: none; height: 1px; margin: 8px 5px 0 7px; background: #cfcfcf; }
.my-cals { flex: none; display: flex; align-items: center; height: 40px; padding: 15px 0 0 12px; font-size: 14.200px; color: #444; }
.tri-d { width: 0; height: 0; margin-right: 4px; border-bottom: 6px solid #555; border-left: 6px solid transparent; }
.cal-sel {
  flex: none;
  height: 24px;
  margin: 0 4px 0 6px;
  padding-left: 38px;
  background: #d9d9d9;
  font-weight: 700;
  font-size: 11.200px;
  line-height: 23px;
  color: #333;
  white-space: nowrap;
}
.nav-fill { flex: 1; }
.nav-mods { flex: none; display: flex; height: 43px; align-items: center; background: #e3e3e3; border-top: 1px solid #dcdcdc; }
.mod { display: flex; align-items: center; justify-content: center; width: 42px; }
.mod-mail { width: 17px; height: 14px; }
.mod-cal { width: 15px; height: 12px; }
.mod-ppl { width: 17px; height: 12px; }
.mod-task { width: 13px; height: 16px; }
.mod-dots { font-size: 10px; color: #555; }

.view { flex: 1; display: flex; flex-direction: column; background: #fff; min-width: 0; }
.view-top { flex: none; height: 47px; padding: 15px 7px 0 0; }
.vsearch { display: flex; align-items: center; justify-content: flex-end; height: 20px; padding-right: 11px; border: 1px solid #a8a8a8; }
.mag { width: 14px; height: 14px; }
.view-main { flex: 1; display: flex; min-height: 0; }
.grid { flex: 1; display: flex; flex-direction: column; min-width: 0; }
.g-blue { flex: none; height: 25px; background: #a1c8ef; }
.g-slot1 { flex: none; height: 158px; border-bottom: 1px solid #e2e2e2; }
.g-slot2 { flex: none; height: 160px; }
.g-bar { flex: none; height: 4px; background: #b0c8e0; }
.g-days { flex: 1; display: flex; padding-left: 9px; border-right: 1px solid #e2e2e2; }
.dcol { flex: none; width: 237.400px; border-left: 1px solid #e2e2e2; }
.dcol-last { width: 239px; }
.sb { flex: none; display: flex; flex-direction: column; width: 17px; padding: 2px 1px; background: #f0f0f0; }
.sb-btn { display: flex; align-items: center; justify-content: center; height: 15px; background: #fff; border: 1px solid #9a9a9a; }
.sb-thumb { height: 37px; margin-top: 371px; background: #fff; border: 1px solid #9a9a9a; }
.sb-down { margin-top: auto; }
.up { border: 4px solid transparent; border-bottom: 4px solid #666; border-top: 0; }
.down { border: 4px solid transparent; border-top: 4px solid #666; border-bottom: 0; }

/* status */
.status { flex: none; display: flex; height: 23px; background: #f1f1f1; border-top: 1px solid #cfcfcf; border-bottom: 1px solid #2a3a5c; align-items: stretch; }
.st-count { padding-left: 7px; line-height: 21px; font-size: 11.500px; }
.st-right { display: flex; align-items: center; margin-left: auto; padding-right: 9px; }
.st-conn { margin-right: 19px; font-size: 11.300px; }
.st-view { display: flex; align-items: center; justify-content: center; width: 38px; height: 21px; background: #c6c6c6; }
.st-view svg { width: 15px; height: 14px; }
.st-read { display: flex; justify-content: center; width: 36px; }
.st-read svg { width: 14px; height: 14px; }
.st-zm { width: 17px; text-align: center; font-size: 14px; font-weight: 700; color: #999; line-height: 16px; }
.st-zp { width: 18px; }
.st-slider { position: relative; width: 99px; height: 1px; background: #aaa; }
.st-slider i { position: absolute; left: 50px; top: -3px; width: 1px; height: 7px; background: #aaa; }
.st-pct { margin-left: 7px; color: #aaa; white-space: nowrap; }

/* taskbar */
.taskbar {
  flex: none;
  display: flex;
  align-items: center;
  height: 39px;
  background: linear-gradient(90deg, #7d9ac5 0, #9fb5d6 14%, #a5bad9 85%, #8d9fba 95%, #77879f 100%);
}
.tk { display: flex; align-items: center; justify-content: center; height: 39px; }
.tk-start { width: 54px; }
.orb { width: 38px; height: 38px; }
.tk-chrome { width: 69px; }
.tk-ppt { width: 57px; }
.tk-xl { width: 65px; }
.tk-on { width: 62px; }
.tk-ol { width: 51px; background: linear-gradient(#e6eef9, #c4d4ea); border: 1px solid #f4f7fb; border-radius: 2px; }
.tk-ghost { flex: none; width: 8px; height: 39px; background: #bccde4; border: 1px solid #e6eef9; }
.tk-wd { width: 66px; }
.tk-ic { width: 30px; height: 30px; }
.tk-l { fill: #fff; font: 700 17px "Open Sans", sans-serif; text-anchor: middle; }
.tk-l-w { font-size: 14px; }
.tray { display: flex; align-items: center; margin-left: auto; height: 39px; }
.tray-up { border: 5px solid transparent; border-bottom: 5px solid #fff; border-top: 0; margin-right: 12px; }
.tray-vol { width: 16px; height: 14px; margin-right: 8px; }
.tray-desk { width: 14px; height: 38px; background: #59677a; border: 1px solid #8c9ab0; margin-right: 1px; }

/* message window */
.msg {
  position: absolute;
  left: 233px;
  top: 98px;
  display: flex;
  flex-direction: column;
  width: 1595px;
  height: 845px;
  background: #fff;
  border: 1px solid #6f7a88;
  border-top-color: #4a5a78;
}
.qat-msg { width: auto; padding-left: 22px; }
.q-save { width: 14px; height: 16px; margin-top: -5px; }
.q-a { width: 13px; height: 13px; margin: -5px 0 0 16px; }
.q-d { width: 7px; height: 8px; margin: -3px 0 0 19px; }
.ribbon-msg { border-bottom: 1px solid #d0d0d0; height: 92px; }
.rg { position: relative; display: flex; flex-direction: column; flex: none; height: 84px; margin-top: 4px; border-right: 1px solid #dcdcdc; }
.rg-clip { width: 189px; }
.rg-text { width: 284px; }
.rg-namen { width: 140px; }
.rg-ins { width: 173px; }
.rg-mark { width: 140px; }
.rg-add { width: 56px; }
.rg-items { display: flex; flex: none; height: 72px; }
.rg-label { height: 16px; text-align: center; color: #666; }
.lbl-clip { padding-right: 18px; }
.lbl-text { padding-right: 16px; }
.lbl-mark { padding-right: 13px; }
.launch { position: absolute; right: 4px; bottom: 0; width: 9px; height: 9px; }
.launch-dim { opacity: .5; }
.rg-end { flex: 1; display: flex; align-items: flex-end; justify-content: flex-end; padding: 0 10px 5px 0; }
.big { flex: none; text-align: center; }
.big-ic { display: flex; align-items: center; justify-content: center; height: 37px; }
.big-t { white-space: nowrap; color: #444; }
.big-t-dim { color: #8f8f8f; }
.big-t-ck { margin: 0 -2px 0 -6px; }
.big-paste { width: 58px; }
.ic-paste { width: 28px; height: 31px; margin-left: 2px; }
.ic-32 { width: 32px; height: 30px; }
.ic-clip { width: 14px; height: 28px; }
.bw76 { width: 76px; }
.bw60 { width: 60px; }
.bw46 { width: 46px; }
.big-add { width: 56px; }
.smalls { flex: none; margin-top: -1px; }
.smalls-dim { color: #7f7f7f; margin-left: 2px; }
.smalls-mark { margin-left: 9px; }
.sm { display: flex; align-items: center; height: 23px; white-space: nowrap; }
.sm-ic { width: 15px; height: 15px; margin-right: 3px; }
.sm-flag { width: 11px; height: 17px; margin: 0 6px 0 0; }
.sm-ex { width: 4px; height: 14px; margin: 0 11px 0 2px; }
.sm-dn { width: 10px; height: 12px; margin: 0 8px 0 -1px; }
.smalls-mark .sm .caret { margin-left: 3px; }

.rg-fmt { display: block; padding: 7px 0 0 4px; }
.fmt { display: grid; align-items: center; }
.fmt1 { height: 23px; grid-template-columns: 63px 60px 3px 21px 21px 10px 20px 12px 22px 12px 11px 20px; }
.fmt1 .fbox2 { grid-column: 2; }
.fmt1 .fi-a1 { grid-column: 4; }
.fmt2 { height: 26px; margin-top: 6px; grid-template-columns: 22px 21px 22px 10px 21px 12px 23px 11px 10px 22px 22px 22px 9px 22px 22px; }
.fbox {
  position: relative;
  height: 23px;
  background: #fff;
  border: 1px solid #bdbdbd;
  padding-left: 2px;
  line-height: 21px;
  font-size: 12px;
  color: #777;
}
.fbox-arrow { position: absolute; right: 0; top: 0; width: 13px; height: 21px; background: #e0e0e0 linear-gradient(#aaa, #aaa) center / 5px 1px no-repeat; }
.fi { display: flex; align-items: center; justify-content: center; color: #909090; }
.fi sup { font-size: 7px; line-height: 8px; align-self: flex-start; margin-top: 2px; }
.fi-a1 { font-size: 15px; }
.fi-a2 { font-size: 12px; }
.fi-b { font-weight: 700; font-size: 12px; }
.fi-k { font-style: italic; }
.fi-u { text-decoration: underline; }
.fi-A { font-size: 15px; }
.f16 { width: 16px; height: 14px; }
.f-ab { font: 9px "Open Sans", sans-serif; fill: #999; }
.f-ltr { font: 8px "Open Sans", sans-serif; fill: #999; }
.fsep { justify-self: center; width: 1px; height: 22px; background: #dcdcdc; }
.at { font: 15px "Open Sans", sans-serif; fill: #555; }

.compose { flex: 1; display: flex; flex-direction: column; padding: 17px 7px 9px 7px; min-height: 0; }
.head-rows { display: flex; flex: none; }
.send {
  flex: none;
  display: flex;
  flex-direction: column;
  align-items: center;
  width: 57px;
  height: 75px;
  padding-top: 20px;
  border: 1px solid #a8a8a8;
  color: #555;
}
.send-ic { width: 27px; height: 15px; margin-bottom: 11px; }
.fields { flex: 1; display: grid; grid-template-columns: 63px 1fr; column-gap: 11px; row-gap: 4px; margin-left: 11px; grid-auto-rows: 26px; align-items: center; }
.fbtn { height: 26px; background: #fff; border: 1px solid #a8a8a8; color: #555; text-align: center; }
.from { padding-left: 1px; color: #555; }
.inp { height: 21px; border: 1px solid #a8a8a8; background: #fff; }
.subj { padding-bottom: 4px; color: #555; }
.mbody { flex: 1; margin-top: 4px; border: 1px solid #a8a8a8; padding: 15px 0 0 10px; }
.caretbar { width: 1px; height: 19px; background: #222; }

/* dialog */
.dlg {
  position: absolute;
  left: 757px;
  top: 370px;
  display: flex;
  flex-direction: column;
  width: 547px;
  height: 428px;
  padding: 0 7px 8px;
  background: linear-gradient(#99b3d4, #bccee4 8%, #a9c2de 40%, #b8cde4 60%, #a6c0dc 100%);
  border: 1px solid #30394a;
  border-radius: 3px 3px 0 0;
  color: #333;
  font-size: 11px;
}
.dlg-head { flex: none; display: flex; justify-content: space-between; height: 29px; padding-top: 9px; }
.dlg-title { padding: 1px 0 0 4px; font-size: 11.300px; line-height: 16px; color: #222; }
.dlg-x { display: flex; align-items: center; justify-content: center; width: 31px; height: 18px; margin: 0 2px 0 0; background: linear-gradient(#d98a82, #c24a42 55%, #b5423b); border: 1px solid #6b2a26; border-radius: 2px; }
.dlg-x svg { width: 10px; height: 10px; }
.dlg-body { flex: 1; display: flex; flex-direction: column; padding: 19px 15px 0 14px; background: #f0f0f0; }
.intro { flex: none; display: flex; align-items: center; gap: 12px; height: 24px; }
.intro svg { flex: none; }
.form { margin-left: 38px; }
.frow { display: flex; }
.fr1 { margin-top: 12px; }
.fr2 { margin-top: 9px; }
.fr3 { margin-top: 8px; }
.fr4 { margin-top: 14px; }
.fr5 { margin-top: 10px; align-items: center; height: 13px; }
.fr6 { margin-top: 11px; }
.fr7 { margin-top: 10px; align-items: center; height: 13px; }
.fr8 { margin-top: 11px; align-items: center; height: 13px; }
.fr9 { margin-top: 12px; }
.fl { flex: none; width: 89px; line-height: 14px; font-size: 10.800px; }
.fl-up { margin-top: -1px; }
.sel {
  position: relative;
  height: 20px;
  padding-left: 3px;
  font-size: 10.900px;
  line-height: 19px;
  background: linear-gradient(#f4f4f4, #e2e2e2 45%, #cfcfcf 100%);
  border: 1px solid #6c6c6c;
  border-radius: 3px;
  color: #222;
  white-space: nowrap;
}
.sel315 { width: 315px; }
.sel-lay { width: 293px; }
.sel-a { position: absolute; right: 3px; top: 6px; border: 4px solid transparent; border-top: 5px solid #111; border-bottom: 0; }
.daterange { height: 16px; color: #777; font-size: 10.800px; }
.detail { position: relative; display: flex; width: 375px; height: 72px; padding: 3px 0 0 5px; background: #fff; border: 1px solid #e4e4e4; }
.thumb { flex: none; width: 60px; height: 60px; background: repeating-linear-gradient(#5f7fb5 0 5px, #dfe6f4 5px 7px) left top / 4px 100% no-repeat, linear-gradient(#fbfcfe, #b3c4e4); border: 1px solid #7e93b8; border-radius: 2px; }
.det-t { margin-left: 8px; }
.det-t b { display: block; font-weight: 600; font-size: 10.600px; color: #222; line-height: 15px; }
.det-t p { margin: 3px 0 0; line-height: 13.500px; color: #333; }
.det-a { right: 3px; top: 34px; }
.cb { flex: none; width: 13px; height: 13px; background: #fff; border: 1px solid #a3a3a3; }
.cb-on { background: linear-gradient(135deg, #cfe6f4, #f2f9fd); border-color: #3b6a86; }
.cb-l { margin-left: 3px; white-space: nowrap; color: #222; }
.cb-up { margin-top: -1px; }
.cb-dim { color: #808080; }
.dlink { margin: -1px 2px 0 auto; color: #3b6fb6; text-decoration: underline; white-space: nowrap; }
.hide-btn { width: 97px; height: 20px; margin-left: 1px; background: linear-gradient(#d4ecf8, #a5d8f2); border: 1px solid #3d7ba0; border-radius: 3px; box-shadow: 0 0 2px #7fd0f5; color: #222; font-size: 11.300px; }
.lay-l { flex: none; width: 82px; line-height: 20px; }
.dlg-foot { display: flex; justify-content: flex-end; gap: 11px; margin-top: 9px; width: 464px; }
.dbtn { width: 73px; height: 21px; background: linear-gradient(#f4f4f4, #e2e2e2 45%, #cfcfcf); border: 1px solid #707070; border-radius: 3px; color: #222; font-size: 11.300px; }

.cursor { position: absolute; left: 1070px; top: 634px; width: 13px; height: 20px; }
.swirl { position: absolute; left: 40px; top: 985px; width: 90px; height: 85px; }
```
